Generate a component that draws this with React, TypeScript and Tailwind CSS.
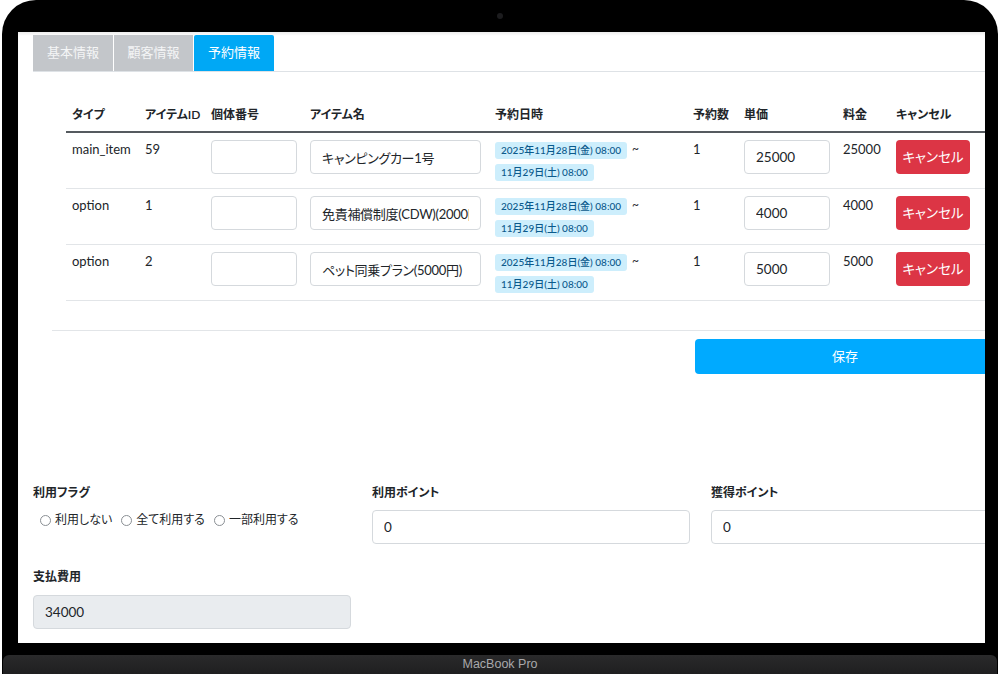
import React from "react";

type Row = {
  type: string;
  id: string;
  name: string;
  qty: string;
  price: string;
  total: string;
};

const rows: Row[] = [
  { type: "main_item", id: "59", name: "キャンピングカー1号", qty: "1", price: "25000", total: "25000" },
  { type: "option", id: "1", name: "免責補償制度(CDW)(2000円)", qty: "1", price: "4000", total: "4000" },
  { type: "option", id: "2", name: "ペット同乗プラン(5000円)", qty: "1", price: "5000", total: "5000" },
];

const cols = "grid grid-cols-[73px_66px_99px_185px_198px_51px_99px_53px_120px]";

function TextInput({ value, className = "" }: { value: string; className?: string }) {
  return (
    <input
      readOnly
      value={value}
      className={`h-[34px] rounded-[4px] border border-[#d5d9dd] bg-white px-[11px] text-[#212529] outline-none overflow-hidden ${className}`}
    />
  );
}

function DateBadge({ children }: { children: React.ReactNode }) {
  return (
    <span className="inline-block rounded-[3px] bg-[#cdeefc] px-[6px] text-[10px] leading-[17px] font-medium text-[#0b5a8c] whitespace-nowrap">
      {children}
    </span>
  );
}

function Radio({ label }: { label: string }) {
  return (
    <label className="flex items-center gap-[4px]">
      <span className="block h-[11px] w-[11px] rounded-full border border-[#8a8f94] bg-white" />
      <span>{label}</span>
    </label>
  );
}

function Screen() {
  return (
    <div className="h-[611px] w-[967px] overflow-hidden bg-white text-[#212529] shadow-[inset_0_3px_3px_-1px_rgba(0,0,0,0.08)]">
      <div className="w-[1020px]">
        {/* tab bar */}
        <div className="ml-[15px] mt-[3px] flex gap-[1px] border-b border-[#dee2e6]">
          <div className="flex h-[36px] w-[80px] items-center justify-center bg-[#c3c6ca] text-[13px] text-[#f4f5f6]">基本情報</div>
          <div className="flex h-[36px] w-[79px] items-center justify-center bg-[#c3c6ca] text-[13px] text-[#f4f5f6]">顧客情報</div>
          <div className="flex h-[36px] w-[80px] items-center justify-center rounded-t-[2px] bg-[#00a8f5] text-[13px] text-white">予約情報</div>
        </div>

        {/* reservation items */}
        <div className="ml-[48px] mt-[26px]">
          <div className={`${cols} h-[35px] items-center border-b-2 border-[#555a5f] text-[12px] font-semibold`}>
            <div className="pl-[6px]">タイプ</div>
            <div className="pl-[6px]">アイテムID</div>
            <div className="pl-[6px]">個体番号</div>
            <div className="pl-[6px]">アイテム名</div>
            <div className="pl-[6px]">予約日時</div>
            <div className="pl-[6px]">予約数</div>
            <div className="pl-[6px]">単価</div>
            <div className="pl-[6px]">料金</div>
            <div className="pl-[6px]">キャンセル</div>
          </div>
          {rows.map((r) => (
            <div key={r.type + r.id} className={`${cols} h-[56px] border-b border-[#e2e5e8] text-[13px]`}>
              <div className="pl-[6px] pt-[6px] leading-[20px]">{r.type}</div>
              <div className="pl-[6px] pt-[6px] leading-[20px]">{r.id}</div>
              <div className="pl-[6px] pt-[7px]">
                <TextInput value="" className="w-[86px] text-[13.5px]" />
              </div>
              <div className="pl-[6px] pt-[7px]">
                <TextInput value={r.name} className="w-[171px] text-[13px] tracking-[-0.3px]" />
              </div>
              <div className="pl-[6px] pt-[9px]">
                <div className="flex items-start">
                  <DateBadge>2025年11月28日(金) 08:00</DateBadge>
                  <span className="ml-[5px] text-[12px] leading-[14px]">~</span>
                </div>
                <div className="mt-[3px]">
                  <DateBadge>11月29日(土) 08:00</DateBadge>
                </div>
              </div>
              <div className="pl-[6px] pt-[6px] leading-[20px]">{r.qty}</div>
              <div className="pl-[6px] pt-[7px]">
                <TextInput value={r.price} className="w-[86px] text-[13.5px]" />
              </div>
              <div className="pl-[6px] pt-[6px] leading-[20px]">{r.total}</div>
              <div className="pl-[6px] pt-[7px]">
                <button className="h-[34px] w-[74px] rounded-[4px] bg-[#dc3545] text-[13.5px] text-white">キャンセル</button>
              </div>
            </div>
          ))}
        </div>

        {/* save */}
        <div className="ml-[34px] mt-[29px] border-t border-[#e2e5e8]">
          <div className="ml-[643px] mt-[8px] flex h-[35px] w-[300px] items-center justify-center rounded-[4px] bg-[#00aaff] text-[13px] text-white">
            保存
          </div>
        </div>

        {/* points and payment */}
        <div className="ml-[15px] mt-[109px] grid grid-cols-[318px_318px_318px] gap-x-[21px] text-[12px]">
          <div>
            <div className="h-[20px] font-semibold leading-[20px]">利用フラグ</div>
            <div className="ml-[7px] mt-[7px] flex h-[20px] items-center gap-[9px]">
              <Radio label="利用しない" />
              <Radio label="全て利用する" />
              <Radio label="一部利用する" />
            </div>
          </div>
          <div>
            <div className="h-[20px] font-semibold leading-[20px]">利用ポイント</div>
            <TextInput value="0" className="mt-[7px] w-[318px] text-[13.5px]" />
          </div>
          <div>
            <div className="h-[20px] font-semibold leading-[20px]">獲得ポイント</div>
            <TextInput value="0" className="mt-[7px] w-[318px] text-[13.5px]" />
          </div>
          <div className="mt-[23px]">
            <div className="h-[20px] font-semibold leading-[20px]">支払費用</div>
            <TextInput value="34000" className="mt-[8px] w-[318px] text-[13.5px] !bg-[#e9ecef]" />
          </div>
        </div>
      </div>
    </div>
  );
}

export default function App() {
  return (
    <div className="h-[674px] w-[1000px] overflow-hidden bg-white font-['Lato','Noto_Sans_CJK_JP',sans-serif] [font-feature-settings:'palt']">
      <div className="mx-[2px] flex h-[674px] flex-col rounded-t-[34px] bg-black">
        {/* bezel with camera */}
        <div className="flex h-[32px] items-center justify-center">
          <span className="block h-[6px] w-[6px] rounded-full bg-[#1c1c1e]" />
        </div>
        <div className="pl-[16px]">
          <Screen />
        </div>
        <div className="h-[12px]" />
        <div className="mx-[1px] flex h-[19px] items-center justify-center rounded-tl-[6px] rounded-tr-[6px] bg-gradient-to-b from-[#2a2a2b] to-[#1f1f20] font-['Liberation_Sans',sans-serif] text-[12.5px] text-[#a9a9ab]">
          MacBook Pro
        </div>
      </div>
    </div>
  );
}
